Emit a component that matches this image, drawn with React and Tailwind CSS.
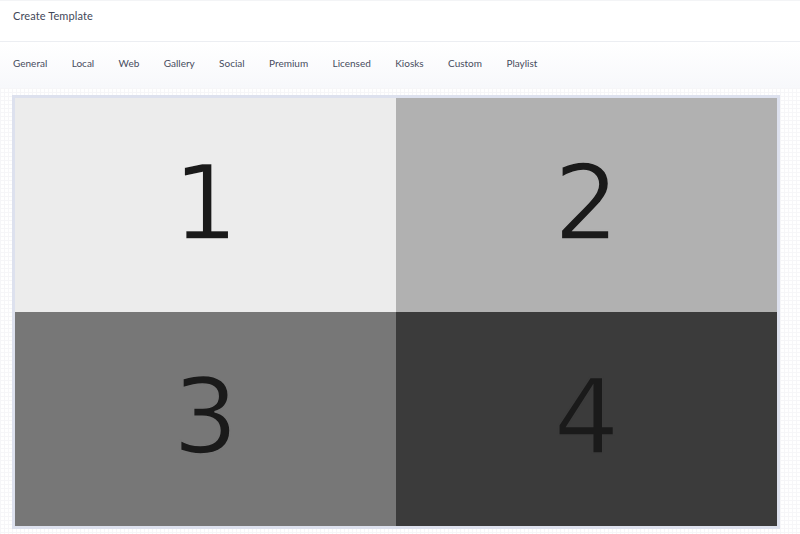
import React from 'react';

const tabs = ['General', 'Local', 'Web', 'Gallery', 'Social', 'Premium', 'Licensed', 'Kiosks', 'Custom', 'Playlist'];

// stroke in the zone colour thins the digit strokes a little
const zones = [
    { n: '1', bg: 'bg-[#ececec]', stroke: '[-webkit-text-stroke:1.6px_#ececec]' },
    { n: '2', bg: 'bg-[#b1b1b1]', stroke: '[-webkit-text-stroke:1.6px_#b1b1b1]' },
    { n: '3', bg: 'bg-[#777777]', stroke: '[-webkit-text-stroke:1.6px_#777777]' },
    { n: '4', bg: 'bg-[#3b3b3b]', stroke: '[-webkit-text-stroke:1.6px_#3b3b3b]' },
];

const App = () => {
    return (
        <div className="w-[800px] h-[534px] overflow-hidden bg-white font-['Lato',sans-serif] text-[#424759]">
            <div className="h-[42px] border-t border-[#f3f4f6] border-b border-b-[#eceef2] px-[13px] pt-[7px]">
                <h1 className="text-[11px] leading-[16px] tracking-[0.1px]">Create Template</h1>
            </div>

            <div className="h-[46px] flex items-center gap-[24.4px] px-[13px] pb-[5px] bg-gradient-to-b from-white to-[#f7f8fb]">
                {tabs.map((tab) => (
                    <span key={tab} className="text-[10px] leading-[14px] text-[#474c5d]">{tab}</span>
                ))}
            </div>

            <div className="h-[446px] px-[12px] pt-[7px] bg-[linear-gradient(to_right,#f6f6f8_1px,transparent_1px),linear-gradient(to_bottom,#f6f6f8_1px,transparent_1px)] bg-[size:4px_4px]">
                <div className="w-[768px] h-[434px] border-[3px] border-[#dde1ee] grid grid-cols-2 grid-rows-2 bg-white">
                    {zones.map((z) => (
                        <div
                            key={z.n}
                            className={`${z.bg} flex items-center justify-center font-['DejaVu_Sans',sans-serif] text-[103px] leading-none text-[#1a1a1a]`}
                        >
                            <span className={`-mt-[4px] ${z.stroke}`}>{z.n}</span>
                        </div>
                    ))}
                </div>
            </div>
        </div>
    );
};

export default App;
